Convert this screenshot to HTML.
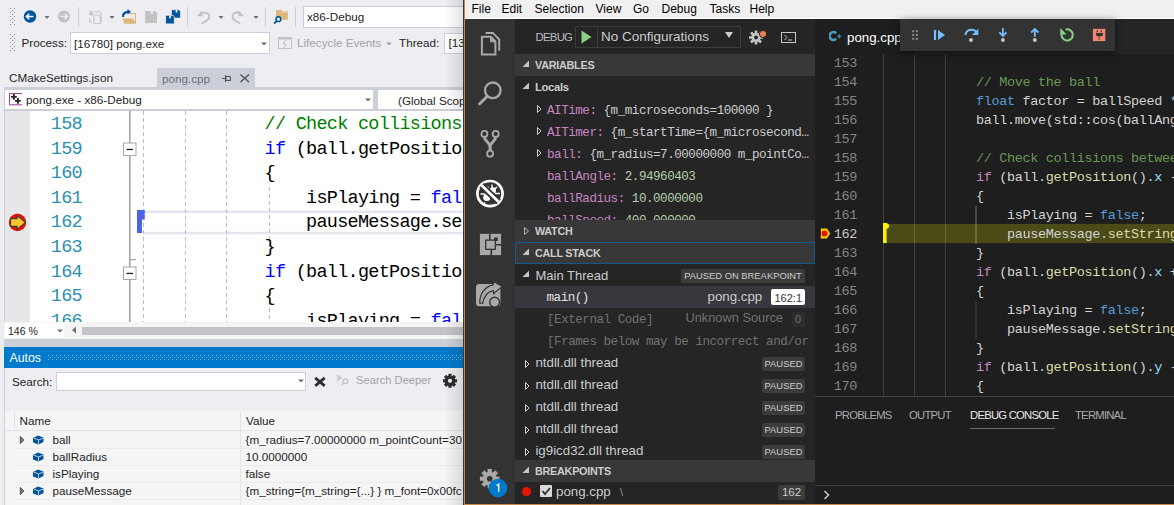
<!DOCTYPE html>
<html><head><meta charset="utf-8">
<style>
*{margin:0;padding:0;box-sizing:border-box}
html,body{width:1174px;height:505px;overflow:hidden;background:#eeeef2;font-family:"Liberation Sans",sans-serif;position:relative}
.a{position:absolute}
.t{position:absolute;white-space:nowrap;line-height:1}
.mono{font-family:"Liberation Mono",monospace}
.s{font-size:11.7px;color:#1e1e1e}
.m{font-size:12px;color:#000}
#vs{position:absolute;left:0;top:0;width:465px;height:505px;background:#eeeef2;overflow:hidden}
.grip{position:absolute;width:5px;background-image:radial-gradient(circle at 1px 1px,#999 0.7px,transparent 0.9px),radial-gradient(circle at 3.5px 2.5px,#999 0.7px,transparent 0.9px);background-size:5px 3px}
.dots{background-image:radial-gradient(circle,rgba(255,255,255,0.45) 0.5px,transparent 0.7px);background-size:2px 2px}
.vsln{font-family:"Liberation Mono",monospace;font-size:18.5px;letter-spacing:-0.725px;color:#2b91af;line-height:24.6px;width:51px;text-align:right}
.vscode{font-family:"Liberation Mono",monospace;font-size:18.5px;letter-spacing:-0.725px;color:#000;line-height:24.6px;--lh:24.6px}.vscode div,.vcode div,.vv div{white-space:pre;height:var(--lh)}
.cg{color:#008000}.cb{color:#0000ff}
.hd{font-size:10.8px;letter-spacing:-0.25px;font-weight:bold;color:#ccc}
.vv{font-family:"Liberation Mono",monospace;font-size:12.6px;letter-spacing:-0.49px;color:#ccc;line-height:22px;--lh:22px}
.vn{color:#c586c0}.vnum{color:#b5cea8}
.badge{background:#3c3c3c;color:#ccc;font-size:10.5px;line-height:14px;text-align:center;border-radius:2px;white-space:nowrap}
.th{font-size:13.3px;color:#ccc}
.pt{font-size:11.3px;letter-spacing:-0.78px;color:#a8a8a8}
.vcln{font-family:"Liberation Mono",monospace;font-size:13.5px;letter-spacing:-0.35px;color:#858585;line-height:19px;width:42px;text-align:right}
.vcode{font-family:"Liberation Mono",monospace;font-size:13.5px;letter-spacing:-0.35px;color:#d4d4d4;line-height:19px;--lh:19px}
.g{color:#6a9955}.k{color:#569cd6}.c{color:#c586c0}.f{color:#dcdcaa}.v{color:#9cdcfe}
</style></head><body>
<div id="vs">
 <!-- toolbar row1 -->
 <svg class="a" style="left:0;top:0" width="465" height="60" viewBox="0 0 465 60">
  <g fill="#8a8a8a"><rect x="10" y="8" width="1" height="1"/><rect x="14" y="8" width="1" height="1"/><rect x="12" y="10" width="1" height="1"/><rect x="10" y="12" width="1" height="1"/><rect x="14" y="12" width="1" height="1"/><rect x="12" y="14" width="1" height="1"/><rect x="10" y="16" width="1" height="1"/><rect x="14" y="16" width="1" height="1"/><rect x="12" y="18" width="1" height="1"/><rect x="10" y="20" width="1" height="1"/><rect x="14" y="20" width="1" height="1"/><rect x="12" y="22" width="1" height="1"/><rect x="10" y="24" width="1" height="1"/><rect x="14" y="24" width="1" height="1"/><rect x="10" y="34" width="1" height="1"/><rect x="14" y="34" width="1" height="1"/><rect x="12" y="36" width="1" height="1"/><rect x="10" y="38" width="1" height="1"/><rect x="14" y="38" width="1" height="1"/><rect x="12" y="40" width="1" height="1"/><rect x="10" y="42" width="1" height="1"/><rect x="14" y="42" width="1" height="1"/><rect x="12" y="44" width="1" height="1"/><rect x="10" y="46" width="1" height="1"/><rect x="14" y="46" width="1" height="1"/><rect x="12" y="48" width="1" height="1"/><rect x="10" y="50" width="1" height="1"/><rect x="14" y="50" width="1" height="1"/></g>
  <!-- back -->
  <circle cx="30" cy="16.5" r="6.2" fill="#00539c"/>
  <path d="M26.5 16.5h7M29.2 13.8l-2.7 2.7 2.7 2.7" stroke="#fff" stroke-width="1.6" fill="none"/>
  <path d="M44.5 16h5l-2.5 3z" fill="#717171"/>
  <circle cx="64" cy="16.5" r="6" fill="#c2c2c2"/>
  <path d="M60.5 16.5h7M64.8 13.8l2.7 2.7-2.7 2.7" stroke="#eeeef2" stroke-width="1.6" fill="none"/>
  <rect x="78" y="7" width="1" height="20" fill="#ccced8"/>
  <!-- new project (gray) -->
  <g stroke="#c8c8c8" fill="none" stroke-width="1.1">
   <path d="M91.2 10.5v5.4M88.5 13.2h5.4M89.3 11.3l3.8 3.8M93.1 11.3l-3.8 3.8"/>
   <path d="M95 11.8h4.5l1.8 1.8v8.5"/>
   <path d="M93.8 15h4.8l1.8 1.8v6.7h-6.6z"/>
   <path d="M89.8 18.5v3.5h2"/>
  </g>
  <path d="M109.5 16h5l-2.5 3z" fill="#717171"/>
  <!-- open -->
  <path d="M128.3 13.5h7.2v9.7" stroke="#dcb67a" stroke-width="1.1" fill="none"/>
  <path d="M122.2 18.4h11l2.3 5.3h-11z" fill="#dcb67a"/>
  <path d="M123 17c0-3.5 2-5.2 5.5-5.2" stroke="#00539c" stroke-width="2.2" fill="none"/>
  <path d="M127.5 9l3.5 2.8-3.5 2.8z" fill="#00539c"/>
  <!-- save gray -->
  <path d="M145.1 10.9h10.4l1.5 1.5v10.7h-11.9z" fill="#c2c2c2"/>
  <rect x="150.7" y="10.9" width="2.4" height="2.9" fill="#eeeef2"/>
  <!-- save all blue -->
  <path d="M171.5 9.7h7.4l1.5 1.5v6.9h-8.9z" fill="#00539c" stroke="#eeeef2" stroke-width="0.6"/>
  <rect x="175.6" y="9.9" width="1.8" height="2.6" fill="#eeeef2"/>
  <path d="M165.6 15.3h7.4l1.3 1.3v7.3h-8.7z" fill="#00539c" stroke="#eeeef2" stroke-width="0.8"/>
  <rect x="169.2" y="15.7" width="1.8" height="2.6" fill="#eeeef2"/>
  <rect x="187" y="7" width="1" height="20" fill="#ccced8"/>
  <!-- undo/redo -->
  <path d="M201.5 13.2c4.5-1.5 8 0.5 7.8 3.5c-0.2 2.5-3.5 5-8 7" stroke="#c2c2c2" stroke-width="1.9" fill="none"/>
  <path d="M196.8 16.3l5.4-6v6z" fill="#c2c2c2"/>
  <path d="M218.5 16h5l-2.5 3z" fill="#717171"/>
  <path d="M239 12.3c-4.5-0.2-6.8 1.8-6.6 4.2c0.2 2.5 3.5 5 7.5 6.8" stroke="#c2c2c2" stroke-width="1.9" fill="none"/>
  <path d="M243.9 16.3l-5.4-6v6z" fill="#c2c2c2"/>
  <path d="M253.5 16h5l-2.5 3z" fill="#717171"/>
  <rect x="265" y="7" width="1" height="20" fill="#ccced8"/>
  <!-- find in files -->
  <path d="M276 10h5.5l1 1.5h5.4v8.3h-11.9z" fill="#dcb67a"/>
  <path d="M281.5 12.3h5" stroke="#f0e0c0" stroke-width="0.8"/>
  <circle cx="278.4" cy="19.2" r="2.4" stroke="#00539c" stroke-width="1.5" fill="#eeeef2"/>
  <path d="M276.6 21.1l-2.5 2.5" stroke="#00539c" stroke-width="1.7"/>
  <rect x="295" y="7" width="1" height="20" fill="#ccced8"/>
  <!-- row2 -->
  <path d="M261 42.5h5l-2.5 3z" fill="#717171"/>
  <rect x="278.5" y="37.5" width="13" height="11" stroke="#c2c2c2" fill="none"/>
  <rect x="278.5" y="37.5" width="13" height="2" fill="#c2c2c2"/>
  <path d="M286 40l-3 4h3l-2 4" stroke="#c2c2c2" stroke-width="1" fill="none"/>
  <path d="M386 42.5h6l-3 3z" fill="#a2a4a5"/>
 </svg>
 <div class="a" style="left:303px;top:6px;width:170px;height:22px;background:#fff;border:1px solid #cccedb"></div>
 <div class="t s" style="left:307px;top:11px">x86-Debug</div>
 <div class="t s" style="left:21.5px;top:37px">Process:</div>
 <div class="a" style="left:70px;top:32px;width:200px;height:22px;background:#fff;border:1px solid #cccedb"></div>
 <div class="t s" style="left:74px;top:38px">[16780] pong.exe</div>
 <svg class="a" style="left:259px;top:40px" width="10" height="8"><path d="M2 2.5h6l-3 3z" fill="#717171"/></svg>
 <div class="t s" style="left:297px;top:37px;color:#a2a4a5">Lifecycle Events</div>
 <div class="t s" style="left:399px;top:37px">Thread:</div>
 <div class="a" style="left:444px;top:32.5px;width:40px;height:21px;background:#fff;border:1px solid #cccedb"></div>
 <div class="t s" style="left:448.5px;top:37px">[13</div>
 <!-- tabs -->
 <div class="t s" style="left:9px;top:72.3px">CMakeSettings.json</div>
 <div class="a" style="left:157px;top:68px;width:98px;height:19px;background:#ccced8"></div>
 <div class="t s" style="left:162px;top:73px;color:#6f6f80">pong.cpp</div>
 <svg class="a" style="left:215px;top:66px" width="40" height="20">
  <path d="M7 12.5h3.5M10.5 9v7" stroke="#555" stroke-width="1.1" fill="none"/>
  <path d="M11 10.5h4.3v4h-4.3z" fill="none" stroke="#555" stroke-width="1.1"/>
  <path d="M25.5 8.5l8.5 7.5M34 8.5l-8.5 7.5" stroke="#555" stroke-width="1.4"/>
 </svg>
 <div class="a" style="left:4px;top:87px;width:461px;height:23.5px;background:#ccced8"></div>
 <!-- nav bar -->
 <div class="a" style="left:5px;top:90px;width:368px;height:19px;background:#fff"></div>
 <div class="a" style="left:378px;top:90px;width:90px;height:19px;background:#fff"></div>
 <svg class="a" style="left:6px;top:91px" width="16" height="16">
  <rect x="3.5" y="2.5" width="13.3" height="11.3" stroke="#9b4f96" stroke-width="1.1" fill="#fafafa"/>
  <path d="M5 5.9h5.8M7.9 3v5.8M9 9.9h5.8M11.9 7v5.8" stroke="#2a2a2a" stroke-width="1.9"/>
 </svg>
 <div class="t s" style="left:26px;top:94px">pong.exe - x86-Debug</div>
 <svg class="a" style="left:363px;top:96px" width="10" height="8"><path d="M2 2.5h6l-3 3z" fill="#717171"/></svg>
 <div class="t s" style="left:398px;top:95px">(Global Scope)</div>
 <!-- editor -->
 <div class="a" style="left:5px;top:110.5px;width:460px;height:212px;background:#fff;overflow:hidden">
  <div class="a" style="left:0;top:0;width:25px;height:212px;background:#e6e7e8"></div>
 </div>
 <div class="a" style="left:4px;top:87px;width:1px;height:418px;background:#ccced8"></div>
 <!-- zoom bar -->
 <div class="a" style="left:4px;top:322px;width:461px;height:16.5px;background:#f5f5f5"></div>
 <div class="a" style="left:5px;top:322.5px;width:59px;height:15.5px;background:#fff"></div>
 <div class="t" style="left:8px;top:325.5px;font-size:10.5px;color:#1e1e1e">146 %</div>
 <svg class="a" style="left:54.5px;top:327px" width="10" height="8"><path d="M2 2.5h6l-3 3z" fill="#717171"/></svg>
 <svg class="a" style="left:68px;top:325px" width="10" height="11"><path d="M8 1.5v7l-4-3.5z" fill="#717171"/></svg>
 <div class="a" style="left:82px;top:326.5px;width:383px;height:8.5px;background:#c2c3c9"></div>
 <div class="a" style="left:4px;top:338.5px;width:461px;height:8px;background:#ccced8"></div>
 <!-- autos -->
 <div class="a" style="left:4px;top:347px;width:461px;height:21px;background:#007acc"></div>
 <svg class="a" style="left:48px;top:355px" width="417" height="5"><defs><pattern id="dp" width="4" height="4" patternUnits="userSpaceOnUse"><rect x="0" y="0" width="1" height="1" fill="#80b8e6"/><rect x="2" y="2" width="1" height="1" fill="#80b8e6"/></pattern></defs><rect width="417" height="5" fill="url(#dp)"/></svg>
 <div class="t" style="left:9.5px;top:351.5px;font-size:12.3px;color:#fff">Autos</div>
 <div class="a" style="left:4px;top:368px;width:1px;height:137px;background:#ccced8"></div>
 <div class="t s" style="left:12px;top:375.5px">Search:</div>
 <div class="a" style="left:56px;top:371.5px;width:250px;height:19px;background:#fff;border:1px solid #cccedb"></div>
 <svg class="a" style="left:296px;top:377px" width="10" height="8"><path d="M2 2.5h6l-3 3z" fill="#717171"/></svg>
 <svg class="a" style="left:300px;top:368px" width="165" height="27">
  <path d="M15.2 9.9l9.5 8M24.7 9.9l-9.5 8" stroke="#2d2d2d" stroke-width="2.7"/>
  <path d="M37 7.2l4 2.8-4 2.8M36.5 10h5" stroke="#c2c2c2" stroke-width="1.2" fill="none"/>
  <circle cx="45.4" cy="13.3" r="2.4" stroke="#c2c2c2" stroke-width="1.2" fill="none"/>
  <path d="M43.6 15.2l-2 2.2" stroke="#c2c2c2" stroke-width="1.3"/>
  <g transform="translate(150,12.8)" fill="#2d2d2d">
   <circle r="5.3"/>
   <rect x="-1.6" y="-7" width="3.2" height="4" transform="rotate(0)"/><rect x="-1.6" y="-7" width="3.2" height="4" transform="rotate(45)"/><rect x="-1.6" y="-7" width="3.2" height="4" transform="rotate(90)"/><rect x="-1.6" y="-7" width="3.2" height="4" transform="rotate(135)"/><rect x="-1.6" y="-7" width="3.2" height="4" transform="rotate(180)"/><rect x="-1.6" y="-7" width="3.2" height="4" transform="rotate(225)"/><rect x="-1.6" y="-7" width="3.2" height="4" transform="rotate(270)"/><rect x="-1.6" y="-7" width="3.2" height="4" transform="rotate(315)"/>
   <circle r="2.1" fill="#eeeef2"/>
  </g>
 </svg>
 <div class="t s" style="left:356px;top:375px;font-size:11.2px;color:#a2a4a5">Search Deeper</div>
 <div class="a" style="left:5px;top:410.5px;width:460px;height:95px;background:#f5f5f5"></div>
 <div class="a" style="left:5px;top:429.5px;width:460px;height:1px;background:#e3e3e8"></div>
 <div class="a" style="left:13.5px;top:411px;width:1px;height:18px;background:#e3e3e8"></div>
 <div class="a" style="left:240px;top:411px;width:1px;height:94px;background:#e3e3e8"></div>
 <div class="t s" style="left:19.5px;top:415px">Name</div>
 <div class="t s" style="left:246px;top:415px">Value</div>
 <div class="a" style="left:14px;top:447.5px;width:451px;height:1px;background:#ebebee"></div>
 <div class="a" style="left:14px;top:464.5px;width:451px;height:1px;background:#ebebee"></div>
 <div class="a" style="left:14px;top:481.5px;width:451px;height:1px;background:#ebebee"></div>
 <div class="a" style="left:14px;top:498.5px;width:451px;height:1px;background:#ebebee"></div>
 <svg class="a" style="left:0;top:430px" width="60" height="75">
  <path d="M20.3 6.5v7l3.6-3.5z M20.3 57.5v7l3.6-3.5z" stroke="#444" stroke-width="0.9" fill="#777"/>
  <g fill="#00539c">
   <path d="M33 8l5-2.5 5.5 2v4.5l-5 2.5-5.5-2z"/>
   <path d="M33 25l5-2.5 5.5 2v4.5l-5 2.5-5.5-2z"/>
   <path d="M33 42l5-2.5 5.5 2v4.5l-5 2.5-5.5-2z"/>
   <path d="M33 59l5-2.5 5.5 2v4.5l-5 2.5-5.5-2z"/>
  </g>
  <g stroke="#eeeef2" stroke-width="0.8" fill="none">
   <path d="M33.5 8l5 2 5-2M38.5 10v4"/>
   <path d="M33.5 25l5 2 5-2M38.5 27v4"/>
   <path d="M33.5 42l5 2 5-2M38.5 44v4"/>
   <path d="M33.5 59l5 2 5-2M38.5 61v4"/>
  </g>
 </svg>
 <div class="t s" style="left:52.5px;top:434px">ball</div>
 <div class="t s" style="left:52.5px;top:450.8px">ballRadius</div>
 <div class="t s" style="left:52.5px;top:467.6px">isPlaying</div>
 <div class="t s" style="left:52.5px;top:484.5px">pauseMessage</div>
 <div class="t s" style="left:245.5px;top:434px">{m_radius=7.00000000 m_pointCount=30 }</div>
 <div class="t s" style="left:245.5px;top:450.8px">10.0000000</div>
 <div class="t s" style="left:245.5px;top:467.6px">false</div>
 <div class="t s" style="left:245.5px;top:484.5px">{m_string={m_string={...} } m_font=0x00fc</div>
 <!-- shadow of vscode window -->
 <div class="a" style="left:445px;top:0;width:20px;height:505px;background:linear-gradient(to right,rgba(0,0,0,0),rgba(0,0,0,0.12))"></div>
</div>

<div id="vsed" class="a" style="left:5px;top:110.5px;width:460px;height:211.5px;background:#fff;overflow:hidden">
 <div class="a" style="left:0;top:0;width:25px;height:212px;background:#e6e7e8"></div>
 <!-- line numbers -->
 <div class="a vsln" style="left:26px;top:2.5px">
  <div>158</div><div>159</div><div>160</div><div>161</div><div>162</div><div>163</div><div>164</div><div>165</div><div>166</div>
 </div>
 <svg class="a" style="left:0;top:0" width="460" height="212">
  <!-- breakpoint -->
  <circle cx="12.5" cy="111.4" r="9.6" fill="#f5f5f5"/>
  <circle cx="12.5" cy="111.4" r="8.8" fill="#e51400"/>
  <path d="M5.6 107.6h6.5v-3l8.5 6.9-8.5 6.9v-3h-6.5z" fill="#fcc72c" stroke="#3a3a3a" stroke-width="1.1" stroke-linejoin="miter"/>
  <!-- outline margin -->
  <rect x="124" y="0" width="1.6" height="212" fill="#a5a5a5"/>
  <rect x="125" y="148" width="6" height="1.2" fill="#a5a5a5"/>
  <rect x="118.5" y="32" width="12.5" height="12.5" fill="#fff" stroke="#a5a5a5"/>
  <rect x="121.5" y="37.8" width="6.5" height="1.3" fill="#1e1e1e"/>
  <rect x="118.5" y="156" width="12.5" height="12.5" fill="#fff" stroke="#a5a5a5"/>
  <rect x="121.5" y="161.8" width="6.5" height="1.3" fill="#1e1e1e"/>
  <!-- highlight line -->
  <rect x="139" y="99.5" width="330" height="2.6" fill="#e6e6ee"/><rect x="139" y="120.8" width="330" height="2.6" fill="#e6e6ee"/>
  <!-- indent guides -->
  <g stroke="#bdbdbd" stroke-width="1" stroke-dasharray="4,3">
   <path d="M138.5 0v212M180.5 0v212M221.5 0v212M264.5 76v60M264.5 190v30"/>
  </g>
  <!-- blue marker -->
  <path d="M132 99h7.8v9.5h-2.8v13.6h-5z" fill="#4a64e8"/>
 </svg>
 <div class="a vscode" style="left:135px;top:2.5px">
<div>            <span class="cg">// Check collisions between the ball and the screen</span></div>
<div>            <span class="cb">if</span> (ball.getPosition().x - ballRadius &lt; 0.f)</div>
<div>            {</div>
<div>                isPlaying = <span class="cb">false</span>;</div>
<div>                pauseMessage.setString("You lost!");</div>
<div>            }</div>
<div>            <span class="cb">if</span> (ball.getPosition().x + ballRadius &gt; gameWidth)</div>
<div>            {</div>
<div>                isPlaying = <span class="cb">false</span>;</div>
 </div>
</div>

<div id="vsc">
 <!-- menu -->
 <div class="a" style="left:464px;top:0;width:710px;height:18px;background:#f0f0f0"></div>
 <div class="a" style="left:464px;top:18px;width:710px;height:1px;background:#fff"></div>
 <div class="t m" style="left:471.5px;top:3px">File</div>
 <div class="t m" style="left:501.5px;top:3px">Edit</div>
 <div class="t m" style="left:534.5px;top:3px">Selection</div>
 <div class="t m" style="left:595.5px;top:3px">View</div>
 <div class="t m" style="left:633px;top:3px">Go</div>
 <div class="t m" style="left:661.5px;top:3px">Debug</div>
 <div class="t m" style="left:709.5px;top:3px">Tasks</div>
 <div class="t m" style="left:749.5px;top:3px">Help</div>
 <!-- activity bar -->
 <div class="a" style="left:465px;top:19px;width:50px;height:486px;background:#333"></div>
 <svg class="a" style="left:465px;top:19px" width="50" height="486">
  <g stroke="#a9a9a9" stroke-width="2" fill="none" stroke-linejoin="miter">
   <path d="M25.5 17.8v5h5z" fill="#a9a9a9" stroke-width="1"/>
   <!-- explorer -->
   <path d="M16.9 17.8v17.6h13.5v-13l-4.6-4.6z"/>
   <path d="M20.6 13.9h7.2l6.4 6.4v11.4"/>
  </g>
  <!-- search -->
  <circle cx="27.8" cy="71.3" r="7.8" stroke="#a9a9a9" stroke-width="2.3" fill="none"/>
  <path d="M14.5 85L21.8 77.7" stroke="#a9a9a9" stroke-width="2.8" stroke-linecap="round"/>
  <!-- scm -->
  <g stroke="#a9a9a9" fill="none">
   <path d="M19.4 117.5c0 5 5.7 6 5.7 10.5M30.7 117.5c0 5-5.7 6-5.7 10.5M25.1 128v3.5" stroke-width="3"/>
   <circle cx="19.4" cy="114.9" r="3" stroke-width="1.8"/><circle cx="30.7" cy="114.9" r="3" stroke-width="1.8"/><circle cx="25.1" cy="134.7" r="3" stroke-width="1.8"/>
  </g>
  <!-- debug (active) -->
  <circle cx="25" cy="174.6" r="12.6" stroke="#fff" stroke-width="2.7" fill="none"/>
  <g fill="#fff">
   <circle cx="21.8" cy="178.5" r="3.6"/>
   <circle cx="27.8" cy="171.5" r="3.2"/>
  </g>
  <path d="M15.5 175h5M20 183.5l-1.5 2M22.5 167.5l1.5 3M27 165.5v4M32 168l-3 2.5M35 174.5h-5M29.5 181.5l2.5 2" stroke="#fff" stroke-width="1.4" fill="none"/>
  <path d="M16.5 166.3L33.5 182.8" stroke="#333" stroke-width="6.5"/>
  <path d="M16.5 166.3L33.5 182.8" stroke="#fff" stroke-width="2.8"/>
  <!-- extensions -->
  <rect x="14.9" y="214.8" width="21.2" height="21.3" fill="#a9a9a9"/>
  <path d="M24.8 214.5v7M26.3 229v7.5M30 225.8h6.5" stroke="#333" stroke-width="1.6"/>
  <rect x="20.7" y="221.1" width="9.6" height="9.2" fill="#a9a9a9" stroke="#333" stroke-width="1.3"/>
  <rect x="29" y="218.5" width="3.8" height="3.5" fill="#333"/>
  <!-- remote -->
  <rect x="11" y="264.9" width="24.4" height="22.4" rx="3.2" fill="#a9a9a9"/>
  <path d="M14.8 284.2C14.6 275 19.5 267.5 28.2 265.8V262.2L37.3 267.4L28.5 274.8V271.6C23.5 272.2 18.8 276.5 17.8 284.2Z" fill="#a9a9a9" stroke="#333" stroke-width="1.2" stroke-linejoin="round"/>
  <circle cx="29.6" cy="283.2" r="4.9" fill="#a9a9a9" stroke="#333" stroke-width="1.4"/>
  <!-- gear -->
  <g transform="translate(24.7,459.7)" fill="#a9a9a9">
   <circle r="7"/>
   <rect x="-2.1" y="-9.8" width="4.2" height="5" transform="rotate(0)"/><rect x="-2.1" y="-9.8" width="4.2" height="5" transform="rotate(45)"/><rect x="-2.1" y="-9.8" width="4.2" height="5" transform="rotate(90)"/><rect x="-2.1" y="-9.8" width="4.2" height="5" transform="rotate(135)"/><rect x="-2.1" y="-9.8" width="4.2" height="5" transform="rotate(180)"/><rect x="-2.1" y="-9.8" width="4.2" height="5" transform="rotate(225)"/><rect x="-2.1" y="-9.8" width="4.2" height="5" transform="rotate(270)"/><rect x="-2.1" y="-9.8" width="4.2" height="5" transform="rotate(315)"/>
   <circle r="2.8" fill="#333"/>
  </g>
  <circle cx="33" cy="469" r="9.3" fill="#007acc"/>
  <path d="M31.6 466.6l2.1-1.4v7.6" stroke="#fff" stroke-width="1.4" fill="none"/>
 </svg>
 <!-- sidebar -->
 <div class="a" style="left:515px;top:19px;width:300px;height:486px;background:#252526"></div>
 <div class="t" style="left:535.5px;top:32px;font-size:11.3px;letter-spacing:-0.7px;color:#bbb">DEBUG</div>
 <div class="a" style="left:575px;top:26px;width:166px;height:22px;border:1px solid #3c3c3c;background:#252526"></div>
 <div class="a" style="left:597px;top:26px;width:1px;height:22px;background:#3c3c3c"></div>
 <svg class="a" style="left:578px;top:28px" width="20" height="18"><path d="M3.5 2.5v13l10-6.5z" fill="#89d185"/></svg>
 <div class="t" style="left:601px;top:30px;font-size:13.5px;color:#ccc">No Configurations</div>
 <svg class="a" style="left:724px;top:30px" width="10" height="10"><path d="M1 2h8l-4 6z" fill="#ccc"/></svg>
 <svg class="a" style="left:745px;top:25px" width="60" height="24">
  <g transform="translate(11,12.5)">
   <circle r="4.5" fill="#c5c5c5"/>
   <path d="M0-7V7M-7 0H7M-5-5L5 5M-5 5L5-5" stroke="#c5c5c5" stroke-width="2.6"/>
   <circle r="1.9" fill="#252526"/>
  </g>
  <circle cx="18" cy="9" r="3.6" fill="#e7814d" stroke="#252526" stroke-width="1"/>
  <rect x="36.5" y="7.5" width="14" height="10" stroke="#c5c5c5" stroke-width="1" fill="none"/>
  <path d="M39.5 10l2.5 2.5-2.5 2.5M43 15h4" stroke="#c5c5c5" stroke-width="1" fill="none"/>
 </svg>
 <!-- variables header -->
 <div class="a" style="left:515px;top:54px;width:300px;height:22px;background:#383838"></div>
 <svg class="a tri" style="left:522px;top:59px" width="10" height="10"><path d="M7 1.5v6.5h-6.5z" fill="#c5c5c5"/></svg>
 <div class="t hd" style="left:535px;top:60px">VARIABLES</div>
 <svg class="a" style="left:522px;top:81px" width="10" height="10"><path d="M7 1.5v6.5h-6.5z" fill="#c5c5c5"/></svg>
 <div class="t" style="left:535px;top:82px;font-size:11.3px;letter-spacing:-0.35px;font-weight:bold;color:#ccc">Locals</div>
 <svg class="a" style="left:535px;top:102px" width="8" height="80">
  <path d="M2.5 3.5v7l3.5-3.5z M2.5 25.5v7l3.5-3.5z M2.5 47.5v7l3.5-3.5z" stroke="#d0d0d0" stroke-width="1" fill="none"/>
 </svg>
 <div class="a" style="left:515px;top:98px;width:300px;height:122px;overflow:hidden">
  <div class="a vv" style="left:32px;top:2px">
   <div><span class="vn">AITime:</span> {m_microseconds=100000 }</div>
   <div><span class="vn">AITimer:</span> {m_startTime={m_microsecond…</div>
   <div><span class="vn">ball:</span> {m_radius=7.00000000 m_pointCo…</div>
   <div><span class="vn">ballAngle:</span> <span class="vnum">2.94960403</span></div>
   <div><span class="vn">ballRadius:</span> <span class="vnum">10.0000000</span></div>
   <div><span class="vn">ballSpeed:</span> <span class="vnum">400.000000</span></div>
  </div>
 </div>
 <!-- watch -->
 <div class="a" style="left:515px;top:220px;width:300px;height:22px;background:#383838"></div>
 <svg class="a" style="left:522px;top:226px" width="10" height="10"><path d="M2.5 1.5v7l4-3.5z" stroke="#c5c5c5" stroke-width="0.9" fill="none"/></svg>
 <div class="t hd" style="left:535px;top:226px">WATCH</div>
 <!-- call stack -->
 <div class="a" style="left:515px;top:242px;width:300px;height:22px;background:#383838;border:1px solid #0e5a8f"></div>
 <svg class="a" style="left:522px;top:247px" width="10" height="10"><path d="M7 1.5v6.5h-6.5z" fill="#c5c5c5"/></svg>
 <div class="t hd" style="left:535px;top:248px">CALL STACK</div>
 <svg class="a" style="left:522px;top:269px" width="10" height="10"><path d="M7 1.5v6.5h-6.5z" fill="#c5c5c5"/></svg>
 <div class="t" style="left:535.5px;top:268.8px;font-size:13px;color:#ccc">Main Thread</div>
 <div class="a badge" style="left:681px;top:269.2px;width:124px;height:13.5px;line-height:13.5px;font-size:9.4px">PAUSED ON BREAKPOINT</div>
 <div class="a" style="left:515px;top:286px;width:300px;height:22px;background:#37373d"></div>
 <div class="t mono" style="left:546.5px;top:291.8px;font-size:12.6px;letter-spacing:-0.49px;color:#e0e0e0">main()</div>
 <div class="t" style="left:707.5px;top:290px;font-size:13.3px;color:#ccc">pong.cpp</div>
 <div class="a" style="left:771px;top:289.2px;width:34px;height:15.8px;background:#fff;border-radius:2px"></div>
 <div class="t" style="left:774.5px;top:292.5px;font-size:11px;color:#333">162:1</div>
 <div class="t mono" style="left:547px;top:313.7px;font-size:12.6px;letter-spacing:-0.49px;color:#717171">[External Code]</div>
 <div class="t" style="left:685.5px;top:311.8px;font-size:12.8px;color:#717171">Unknown Source</div>
 <div class="a" style="left:792px;top:311.5px;width:13px;height:15.5px;background:#2d2d2d;border-radius:2px"></div>
 <div class="t" style="left:795px;top:314px;font-size:11px;color:#6e6e6e">0</div>
 <div class="t mono" style="left:547px;top:335.7px;font-size:12.6px;letter-spacing:-0.49px;color:#717171">[Frames below may be incorrect and/or</div>
 <svg class="a" style="left:523px;top:352px" width="8" height="110">
  <path d="M2.5 8.5v7l3.5-3.5z M2.5 30.5v7l3.5-3.5z M2.5 52.5v7l3.5-3.5z M2.5 74.5v7l3.5-3.5z M2.5 96.5v7l3.5-3.5z" stroke="#d0d0d0" stroke-width="1" fill="none"/>
 </svg>
 <div class="t th" style="left:535.4px;top:356.3px">ntdll.dll thread</div>
 <div class="t th" style="left:535.4px;top:378.3px">ntdll.dll thread</div>
 <div class="t th" style="left:535.4px;top:400.3px">ntdll.dll thread</div>
 <div class="t th" style="left:535.4px;top:422.3px">ntdll.dll thread</div>
 <div class="t th" style="left:535.4px;top:444.3px">ig9icd32.dll thread</div>
 <div class="a badge" style="left:762px;top:357.3px;width:43px;height:13.3px;line-height:13.3px;font-size:9.4px">PAUSED</div>
 <div class="a badge" style="left:762px;top:379.3px;width:43px;height:13.3px;line-height:13.3px;font-size:9.4px">PAUSED</div>
 <div class="a badge" style="left:762px;top:401.3px;width:43px;height:13.3px;line-height:13.3px;font-size:9.4px">PAUSED</div>
 <div class="a badge" style="left:762px;top:423.3px;width:43px;height:13.3px;line-height:13.3px;font-size:9.4px">PAUSED</div>
 <div class="a badge" style="left:762px;top:445.3px;width:43px;height:13.3px;line-height:13.3px;font-size:9.4px">PAUSED</div>
 <!-- breakpoints -->
 <div class="a" style="left:515px;top:460px;width:300px;height:22px;background:#383838"></div>
 <svg class="a" style="left:522px;top:465px" width="10" height="10"><path d="M7 1.5v6.5h-6.5z" fill="#c5c5c5"/></svg>
 <div class="t hd" style="left:535px;top:466px">BREAKPOINTS</div>
 <svg class="a" style="left:515px;top:482px" width="300" height="21">
  <circle cx="11.5" cy="9.5" r="4.6" fill="#e51400"/>
  <rect x="25" y="3" width="12" height="12" rx="1" fill="#d9d9d9"/>
  <path d="M27.5 9l2.5 3 5-6" stroke="#333" stroke-width="1.8" fill="none"/>
 </svg>
 <div class="t" style="left:556px;top:485px;font-size:13.3px;color:#ccc">pong.cpp</div>
 <div class="t" style="left:620px;top:487px;font-size:11px;color:#999">\</div>
 <div class="a badge" style="left:778px;top:485px;width:27px;height:15px;font-size:11.5px">162</div>
 <!-- editor area -->
 <div class="a" style="left:815px;top:19px;width:359px;height:35px;background:#252526"></div>
 <div class="a" style="left:815px;top:19px;width:100px;height:35px;background:#1e1e1e"></div>
 <svg class="a" style="left:829px;top:29px" width="14" height="14">
  <path d="M7.2 4.2a3.9 3.9 0 1 0 0 5.6" stroke="#519aba" stroke-width="2.6" fill="none"/>
  <path d="M8 7.2h4.5M10.3 5v4.4" stroke="#519aba" stroke-width="1"/>
 </svg>
 <div class="t" style="left:847px;top:31px;font-size:13.3px;color:#fff">pong.cpp</div>
 <div class="a" style="left:815px;top:54px;width:359px;height:342px;background:#1e1e1e;overflow:hidden" id="vsced"></div>
 <!-- panel -->
 <div class="a" style="left:815px;top:395.5px;width:359px;height:1px;background:#444"></div>
 <div class="a" style="left:815px;top:396.5px;width:359px;height:107px;background:#1e1e1e"></div>
 <div class="t pt" style="left:835px;top:410px">PROBLEMS</div>
 <div class="t pt" style="left:909px;top:410px">OUTPUT</div>
 <div class="t pt" style="left:970px;top:410px;color:#e7e7e7">DEBUG CONSOLE</div>
 <div class="a" style="left:970px;top:428px;width:85px;height:1px;background:#6b6b6b"></div>
 <div class="t pt" style="left:1075px;top:410px">TERMINAL</div>
 <div class="a" style="left:815px;top:485px;width:359px;height:1px;background:#3a3a3a"></div>
 <svg class="a" style="left:820px;top:488px" width="14" height="14"><path d="M4.5 3l4 4-4 4" stroke="#ccc" stroke-width="1.5" fill="none"/></svg>
 <!-- window border -->
 <div class="a" style="left:463px;top:0;width:1px;height:505px;background:#3a3a3a"></div>
 <div class="a" style="left:464px;top:0;width:1px;height:505px;background:#c3884a"></div>
 <div class="a" style="left:464px;top:503.5px;width:710px;height:1.5px;background:#c3884a"></div>
</div>

<div class="a" style="left:815px;top:54px;width:359px;height:341.5px;overflow:hidden">
 <svg class="a" style="left:0;top:0" width="359" height="342">
  <g stroke="#404040" stroke-width="1">
   <path d="M68.5 0v342M99.5 0v342M130.5 0v342M161 247v38"/>
  </g>
  <path d="M161 152v38" stroke="#707070" stroke-width="1"/>
  <rect x="72" y="169.9" width="300" height="19.2" fill="rgba(255,255,0,0.2)"/>
  <path d="M68 168.9h3.7v20.2h-3.7z" fill="#ffee00"/>
  <circle cx="71.4" cy="172" r="2.7" fill="#ffee00"/>
  <!-- breakpoint stopped glyph -->
  <path d="M5.9 174.5h6l3.3 4.9-3.3 5h-6z" fill="#ffcc00"/>
  <circle cx="9.5" cy="179.4" r="3" fill="#e51400"/>
 </svg>
 <div class="a vcln" style="left:0;top:0">
  <div>153</div><div>154</div><div>155</div><div>156</div><div>157</div><div>158</div><div>159</div><div>160</div><div>161</div><div style="color:#c6c6c6">162</div><div>163</div><div>164</div><div>165</div><div>166</div><div>167</div><div>168</div><div>169</div><div>170</div>
 </div>
 <div class="a vcode" style="left:68px;top:0">
<div> </div>
<div>            <span class="g">// Move the ball</span></div>
<div>            <span class="k">float</span> factor = ballSpeed * deltaTime;</div>
<div>            ball.move(std::cos(ballAngle) * factor, std::sin(ballAngle) * factor);</div>
<div> </div>
<div>            <span class="g">// Check collisions between the ball and the screen</span></div>
<div>            <span class="c">if</span> (ball.<span class="f">getPosition</span>().<span class="v">x</span> - ballRadius &lt; 0.f)</div>
<div>            {</div>
<div>                isPlaying = <span class="k">false</span>;</div>
<div>                pauseMessage.<span class="f">setString</span>("Computer wins!");</div>
<div>            }</div>
<div>            <span class="c">if</span> (ball.<span class="f">getPosition</span>().<span class="v">x</span> + ballRadius &gt; gameWidth)</div>
<div>            {</div>
<div>                isPlaying = <span class="k">false</span>;</div>
<div>                pauseMessage.<span class="f">setString</span>("You won!");</div>
<div>            }</div>
<div>            <span class="c">if</span> (ball.<span class="f">getPosition</span>().<span class="v">y</span> - ballRadius &lt; 0.f)</div>
<div>            {</div>
 </div>
</div>
<!-- debug toolbar -->
<div class="a" style="left:900px;top:19px;width:215px;height:31.5px;background:#333;box-shadow:0 2px 8px rgba(0,0,0,0.6)"></div>
<svg class="a" style="left:900px;top:19px" width="215" height="32">
 <g fill="#8a8a8a"><rect x="12.2" y="11.2" width="2" height="2"/><rect x="15.8" y="11.2" width="2" height="2"/><rect x="12.2" y="15" width="2" height="2"/><rect x="15.8" y="15" width="2" height="2"/><rect x="12.2" y="18.8" width="2" height="2"/><rect x="15.8" y="18.8" width="2" height="2"/></g>
 <!-- continue -->
 <rect x="33.9" y="11.1" width="2.2" height="10" fill="#75beff"/>
 <path d="M38 11v10l7-5z" fill="#75beff"/>
 <!-- step over -->
 <path d="M65.3 16c0.8-3.5 3.5-5.2 6.2-5.2c2.5 0 4.3 1.2 5.3 3" stroke="#75beff" stroke-width="2" fill="none"/>
 <path d="M78.3 9.8v6.1h-6.3z" fill="#75beff"/>
 <circle cx="71" cy="21.1" r="2" fill="#c5c5c5"/>
 <!-- step into -->
 <path d="M102.9 8.9v8" stroke="#75beff" stroke-width="1.8"/>
 <path d="M99.3 13.3l3.6 3.6 3.6-3.6" stroke="#75beff" stroke-width="1.8" fill="none"/>
 <circle cx="102.9" cy="21.1" r="2" fill="#c5c5c5"/>
 <!-- step out -->
 <path d="M134.8 17.8v-8" stroke="#75beff" stroke-width="1.8"/>
 <path d="M131.2 13.5l3.6-3.6 3.6 3.6" stroke="#75beff" stroke-width="1.8" fill="none"/>
 <circle cx="134.8" cy="21.1" r="2" fill="#c5c5c5"/>
 <!-- restart -->
 <path d="M162.3 13.2a5.6 5.6 0 1 0 3.2-2.6" stroke="#89d185" stroke-width="2" fill="none"/>
 <path d="M160.3 9v6.5h6.3z" fill="#89d185"/>
 <!-- disconnect -->
 <rect x="192.9" y="9.9" width="12.4" height="12.2" fill="#f48771"/>
 <path d="M197.3 11.3v2M201.2 11.3v2" stroke="#333" stroke-width="1.2"/>
 <path d="M195.8 14h7.4l-0.5 2.5-1.5 1h-3.4l-1.5-1z" fill="#333"/>
 <path d="M199.2 17.5v3.5" stroke="#9b5a4c" stroke-width="1.6"/>
</svg>

</body></html>
